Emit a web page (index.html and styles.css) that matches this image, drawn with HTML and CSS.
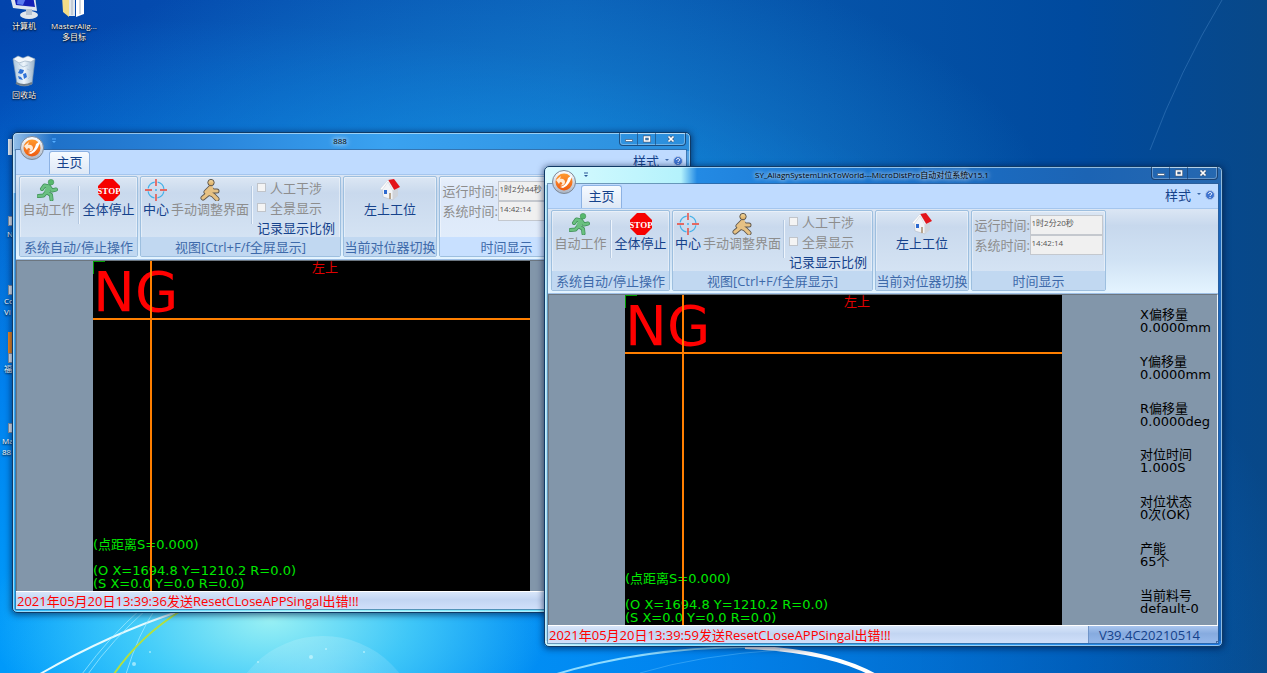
FILE: index.html
```
<!DOCTYPE html>
<html lang="zh-CN">
<head>
    <meta charset="UTF-8">
    <meta name="viewport" content="width=device-width, initial-scale=1.0">
    <title>MicroDistPro自动对位系统</title>
    <link rel="stylesheet" href="styles.css">
</head>
<body>
    <!-- Shared icons -->
    <svg class="sprite" aria-hidden="true">
        <defs>
            <linearGradient id="orbRim" x1="0" y1="0" x2="0" y2="1">
                <stop offset="0" stop-color="#ffffff"/><stop offset="1" stop-color="#a9b4c4"/>
            </linearGradient>
            <linearGradient id="orbFill" x1="0" y1="0" x2="0" y2="1">
                <stop offset="0" stop-color="#ff9a2e"/><stop offset="1" stop-color="#ee5a10"/>
            </linearGradient>
            <linearGradient id="goldFill" x1="0" y1="0" x2="0" y2="1">
                <stop offset="0" stop-color="#f4d9a0"/><stop offset="1" stop-color="#d9a95c"/>
            </linearGradient>
            <linearGradient id="binFill" x1="0" y1="0" x2="1" y2="0">
                <stop offset="0" stop-color="#a9c4dc"/><stop offset="0.5" stop-color="#eef6fc"/><stop offset="1" stop-color="#93aec8"/>
            </linearGradient>
        </defs>
        <symbol id="i-orb" viewBox="0 0 24 24">
            <circle cx="12" cy="12" r="11.5" fill="url(#orbRim)" stroke="#7c8898"/>
            <circle cx="12" cy="12" r="8.500" fill="url(#orbFill)"/>
            <path d="M4 10l5-4-1 3c3-1 5 1 5 3 0 3-3 4-5 3 3 0 3-3 0-3l-1 2z" fill="#ffe9d2"/>
            <path d="M20 5c-1 6-4 11-9 13l-3-1c5-1 7-5 8-9z" fill="#fff"/>
        </symbol>
        <symbol id="i-run" viewBox="0 0 22 22">
            <path d="M5 10L7.500 6.500 12 7.500 9.500 13l4.500 3 .5 4.500M9.500 13l-3 3.500-5 .5M12 7.500l3 4 4-1" fill="none" stroke="#3f8f57" stroke-width="4" stroke-linecap="round" stroke-linejoin="round"/>
            <path d="M5 10L7.500 6.500 12 7.500 9.500 13l4.500 3 .5 4.500M9.500 13l-3 3.500-5 .5M12 7.500l3 4 4-1" fill="none" stroke="#6ac080" stroke-width="2.600" stroke-linecap="round" stroke-linejoin="round"/>
            <path d="M12 7.500L9.500 13" stroke="#6ac080" stroke-width="5"/>
            <circle cx="14" cy="3.200" r="2.800" fill="#57b96d" stroke="#3f8f57" stroke-width="0.600"/>
        </symbol>
        <symbol id="i-stop" viewBox="0 0 22 22">
            <path d="M7 0h8l7 7v8l-7 7H7l-7-7V7z" fill="#f60000"/>
        </symbol>
        <symbol id="i-target" viewBox="0 0 22 22">
            <circle cx="11" cy="11" r="8" fill="none" stroke="#45b2e8" stroke-width="1.200" stroke-dasharray="9.560 3" stroke-dashoffset="-1.500"/>
            <path d="M11 0v7M11 15v7M0 11h7M15 11h7" stroke="#ea4335" stroke-width="1.400"/>
            <circle cx="11" cy="11" r="1" fill="#45b2e8"/>
        </symbol>
        <symbol id="i-man" viewBox="0 0 22 22">
            <g fill="none" stroke-linecap="round" stroke-linejoin="round">
                <path d="M11 9l-4 4M11 9l-1 5-6 5M10 14l4 2 4 4M11 9l3 3h4" stroke="#5e574e" stroke-width="5"/>
                <path d="M11 9l-4 4M11 9l-1 5-6 5M10 14l4 2 4 4M11 9l3 3h4" stroke="#e6c184" stroke-width="3.200"/>
                <path d="M12 9l-1 5" stroke="#e6c184" stroke-width="4.500"/>
            </g>
            <circle cx="12" cy="3.600" r="3.200" fill="url(#goldFill)" stroke="#5e574e"/>
        </symbol>
        <symbol id="i-house" viewBox="0 0 22 22">
            <path d="M3 10l6-8 5 9v10l-10-3z" fill="#f2f4f7" stroke="#b5bcc8" stroke-width="0.600"/>
            <path d="M14 11l5-2v8l-5 4z" fill="#cfd3da"/>
            <path d="M9 1l6-1 6 8-6 3z" fill="#e3151b"/>
            <path d="M9 1l6 10-1 1-5-9-6 8-2-1z" fill="#fff" stroke="#c3c8d0" stroke-width="0.400"/>
            <path d="M5 11h3v4H5z" fill="#2d6ad0"/>
            <path d="M10 14h2v6h-2z" fill="#b7a58e"/>
        </symbol>
        <symbol id="i-help" viewBox="0 0 10 10">
            <circle cx="5" cy="5" r="4.500" fill="#3f74d0" stroke="#b4c6e4"/>
            <path d="M3.500 4c0-2 3.200-2 3.200-.2C6.700 5 5 4.800 5 6M5 7v1" fill="none" stroke="#fff"/>
        </symbol>
        <symbol id="i-qat" viewBox="0 0 6 6">
            <path d="M1 1h4" stroke="#2b5796"/><path d="M1 3h4L3 5z" fill="#2b5796"/>
        </symbol>
        <symbol id="i-min" viewBox="0 0 10 8">
            <path d="M1.500 4.500h7v2h-7z" fill="#fff" stroke="#445a78" stroke-width="0.700"/>
        </symbol>
        <symbol id="i-max" viewBox="0 0 10 8">
            <path d="M2.500 2h5v4h-5z" fill="none" stroke="#445a78" stroke-width="2.800"/>
            <path d="M2.500 2h5v4h-5z" fill="none" stroke="#fff" stroke-width="1.600"/>
        </symbol>
        <symbol id="i-close" viewBox="0 0 10 8">
            <path d="M2.500 1.500l5 5M7.500 1.500l-5 5" stroke="#445a78" stroke-width="3"/>
            <path d="M2.500 1.500l5 5M7.500 1.500l-5 5" stroke="#fff" stroke-width="1.700"/>
        </symbol>
    </svg>

    <main class="desktop">
        <!-- Wallpaper light beams -->
        <svg class="wallpaper" viewBox="0 0 1267 673" preserveAspectRatio="none" aria-hidden="true">
            <defs>
                <filter id="soft"><feGaussianBlur stdDeviation="0.700"/></filter>
                <radialGradient id="disc" cx="0.500" cy="0.200" r="0.700">
                    <stop offset="0" stop-color="#fff" stop-opacity="0.200"/><stop offset="1" stop-color="#fff" stop-opacity="0.040"/>
                </radialGradient>
            </defs>
            <circle cx="323" cy="733" r="97" fill="url(#disc)"/>
            <g fill="none" filter="url(#soft)">
                <path d="M40 674Q110 634 180 611" stroke="#e4fbff" stroke-width="2"/>
                <path d="M82 674Q110 636 142 608M88 674Q112 640 148 608M126 674Q138 634 156 608" stroke="#a8ecff" stroke-opacity="0.700"/>
                <path d="M114 674Q140 636 182 610" stroke="#b4e03c" stroke-width="2"/>
                <path d="M550 676Q640 648 745 647" stroke="#8fdcff" stroke-width="2"/>
                <path d="M745 647Q830 650 876 676" stroke="#fff" stroke-width="4"/>
                <path d="M640 673Q700 655 780 650" stroke="#6fc8ff" stroke-opacity="0.400"/>
                <path d="M1222 0Q1180 70 1150 150" stroke="#6aa4e0" stroke-opacity="0.300"/>
            </g>
            <g fill="#d8fbff" fill-opacity="0.600">
                <circle cx="134" cy="664" r="2"/><circle cx="150" cy="652" r="1"/><circle cx="311" cy="657" r="2"/>
                <circle cx="326" cy="649" r="1"/><circle cx="258" cy="662" r="1"/><circle cx="364" cy="652" r="1"/>
            </g>
        </svg>

        <div class="shortcut computer">
            <svg width="32" height="24" viewBox="0 0 32 24">
                <path d="M2 0h25l2 15-24-3z" fill="#dfe6ef"/>
                <path d="M6 0h19l2 11L8 9z" fill="#1320b8"/><path d="M10 0h9l-4 9-6-1z" fill="#5a78f0"/>
                <ellipse cx="21" cy="19" rx="9" ry="4" fill="#e2e7ec"/><path d="M18 13h6v6h-6z" fill="#b8c4d2"/>
            </svg>
            <span>计算机</span>
        </div>
        <div class="shortcut folder">
            <svg width="28" height="24" viewBox="0 0 28 24">
                <path d="M2 0h7v21L3 16z" fill="#f3dd88"/><path d="M9 0h6v20H9z" fill="#dfe6ec"/>
                <path d="M16 0h8v18l-8 3z" fill="#fff"/><path d="M12 0v19M20 0v18" stroke="#a8b4c0"/>
            </svg>
            <span>MasterAlig...<br>多目标</span>
        </div>
        <div class="shortcut bin">
            <svg width="28" height="34" viewBox="0 0 28 34">
                <path d="M3 4h22l-3 25q-8 4-15 0z" fill="url(#binFill)" stroke="#7f98b0" stroke-width="0.600"/>
                <path d="M3 4l5-3 5 2 5-2 7 3-4 3-6-1-6 2z" fill="#f2f7fb" stroke="#92a8bc" stroke-width="0.600"/>
                <path d="M9 9l4 3 5-2M17 14l5 2M8 14l4 2M18 24l3-3" stroke="#b4c8da" fill="none"/>
                <path d="M8 18l2-4 4 1-1 3-2 1zM13 19l3-1 1 4-3 2zM8 21l3 1 2 3-4-1z" fill="#2f72d6"/>
                <path d="M6 28q8 4 16 0" fill="none" stroke="#6d7c88" stroke-width="2"/>
            </svg>
            <span>回收站</span>
        </div>
        <div class="hidden-file file-blank"><i class="thumb"></i></div>
        <div class="hidden-file file-n"><i class="link-mark"></i><span>N</span></div>
        <div class="hidden-file file-co"><i class="link-mark"></i><span>Co<br>Vi</span></div>
        <div class="hidden-file file-fu"><i class="thumb orange"></i><i class="link-mark"></i><span>福</span></div>
        <div class="hidden-file file-ma"><i class="link-mark"></i><span>Ma<br>88</span></div>

        <section class="window window-back">
            <header class="title-bar">
                <svg class="orb"><use href="#i-orb"/></svg>
                <button class="quick" aria-label="自定义"><svg width="6" height="6"><use href="#i-qat"/></svg></button>
                <h1>888</h1>
                <div class="caption-buttons">
                    <button aria-label="最小化"><svg><use href="#i-min"/></svg></button>
                    <button aria-label="最大化"><svg><use href="#i-max"/></svg></button>
                    <button class="close" aria-label="关闭"><svg><use href="#i-close"/></svg></button>
                </div>
            </header>
            <div class="client">
                <nav class="tabs">
                    <button class="tab">主页</button>
                    <button class="style-menu">样式<i class="arrow"></i></button>
                    <button class="help" aria-label="帮助"><svg width="10" height="10"><use href="#i-help"/></svg></button>
                </nav>
                <div class="ribbon">
                    <div class="group group-run">
                        <div class="group-body">
                            <button class="tool" disabled><svg><use href="#i-run"/></svg>自动工作</button>
                            <i class="divider"></i>
                            <button class="tool"><svg viewBox="0 0 22 22"><use href="#i-stop"/><text x="11" y="15" text-anchor="middle" class="stop-text">STOP</text></svg>全体停止</button>
                        </div>
                        <div class="group-name">系统自动/停止操作</div>
                    </div>
                    <div class="group group-view">
                        <div class="group-body">
                            <button class="tool"><svg><use href="#i-target"/></svg>中心</button>
                            <button class="tool" disabled><svg><use href="#i-man"/></svg>手动调整界面</button>
                            <i class="divider"></i>
                            <div class="checks">
                                <label><input type="checkbox" disabled>人工干涉</label>
                                <label><input type="checkbox" disabled>全景显示</label>
                                <button>记录显示比例</button>
                            </div>
                        </div>
                        <div class="group-name">视图[Ctrl+F/f全屏显示]</div>
                    </div>
                    <div class="group group-station">
                        <div class="group-body">
                            <button class="tool"><svg><use href="#i-house"/></svg>左上工位</button>
                        </div>
                        <div class="group-name">当前对位器切换</div>
                    </div>
                    <div class="group group-time hover">
                        <div class="group-body times">
                            <label for="run1">运行时间:</label><input id="run1" type="text" value="1时2分44秒" readonly>
                            <label for="sys1">系统时间:</label><input id="sys1" type="text" value="14:42:14" readonly>
                        </div>
                        <div class="group-name">时间显示</div>
                    </div>
                </div>
                <div class="view">
                    <div class="camera">
                        <div class="position">左上</div>
                        <div class="verdict">NG</div>
                        <div class="readout">
                            <p>(点距离S=0.000)</p>
                            <p>(O X=1694.8 Y=1210.2 R=0.0)<br>(S X=0.0 Y=0.0 R=0.0)</p>
                        </div>
                        <i class="cross-x"></i>
                        <i class="cross-y"></i>
                    </div>
                </div>
                <footer class="status"><span class="log">2021年05月20日13:39:36发送ResetCLoseAPPSingal出错!!!</span></footer>
            </div>
        </section>

        <section class="window window-front">
            <header class="title-bar">
                <svg class="orb"><use href="#i-orb"/></svg>
                <button class="quick" aria-label="自定义"><svg width="6" height="6"><use href="#i-qat"/></svg></button>
                <h1>SY_AliagnSystemLinkToWorld---MicroDistPro自动对位系统V15.1</h1>
                <div class="caption-buttons">
                    <button aria-label="最小化"><svg><use href="#i-min"/></svg></button>
                    <button aria-label="最大化"><svg><use href="#i-max"/></svg></button>
                    <button class="close" aria-label="关闭"><svg><use href="#i-close"/></svg></button>
                </div>
            </header>
            <div class="client">
                <nav class="tabs">
                    <button class="tab">主页</button>
                    <button class="style-menu">样式<i class="arrow"></i></button>
                    <button class="help" aria-label="帮助"><svg width="10" height="10"><use href="#i-help"/></svg></button>
                </nav>
                <div class="ribbon">
                    <div class="group group-run">
                        <div class="group-body">
                            <button class="tool" disabled><svg><use href="#i-run"/></svg>自动工作</button>
                            <i class="divider"></i>
                            <button class="tool"><svg viewBox="0 0 22 22"><use href="#i-stop"/><text x="11" y="15" text-anchor="middle" class="stop-text">STOP</text></svg>全体停止</button>
                        </div>
                        <div class="group-name">系统自动/停止操作</div>
                    </div>
                    <div class="group group-view">
                        <div class="group-body">
                            <button class="tool"><svg><use href="#i-target"/></svg>中心</button>
                            <button class="tool" disabled><svg><use href="#i-man"/></svg>手动调整界面</button>
                            <i class="divider"></i>
                            <div class="checks">
                                <label><input type="checkbox" disabled>人工干涉</label>
                                <label><input type="checkbox" disabled>全景显示</label>
                                <button>记录显示比例</button>
                            </div>
                        </div>
                        <div class="group-name">视图[Ctrl+F/f全屏显示]</div>
                    </div>
                    <div class="group group-station">
                        <div class="group-body">
                            <button class="tool"><svg><use href="#i-house"/></svg>左上工位</button>
                        </div>
                        <div class="group-name">当前对位器切换</div>
                    </div>
                    <div class="group group-time">
                        <div class="group-body times">
                            <label for="run2">运行时间:</label><input id="run2" type="text" value="1时2分20秒" readonly>
                            <label for="sys2">系统时间:</label><input id="sys2" type="text" value="14:42:14" readonly>
                        </div>
                        <div class="group-name">时间显示</div>
                    </div>
                </div>
                <div class="view">
                    <div class="camera">
                        <div class="position">左上</div>
                        <div class="verdict">NG</div>
                        <div class="readout">
                            <p>(点距离S=0.000)</p>
                            <p>(O X=1694.8 Y=1210.2 R=0.0)<br>(S X=0.0 Y=0.0 R=0.0)</p>
                        </div>
                        <i class="cross-x"></i>
                        <i class="cross-y"></i>
                    </div>
                    <dl class="results">
                        <div><dt>X偏移量</dt><dd>0.0000mm</dd></div>
                        <div><dt>Y偏移量</dt><dd>0.0000mm</dd></div>
                        <div><dt>R偏移量</dt><dd>0.0000deg</dd></div>
                        <div><dt>对位时间</dt><dd>1.000S</dd></div>
                        <div><dt>对位状态</dt><dd>0次(OK)</dd></div>
                        <div><dt>产能</dt><dd>65个</dd></div>
                        <div><dt>当前料号</dt><dd>default-0</dd></div>
                    </dl>
                </div>
                <footer class="status">
                    <span class="log">2021年05月20日13:39:59发送ResetCLoseAPPSingal出错!!!</span>
                    <span class="version">V39.4C20210514</span>
                </footer>
            </div>
        </section>
    </main>
</body>
</html>
```
FILE: styles.css
```
* {
    box-sizing: border-box;
}

body {
    margin: 0;
    font-family: "Open Sans", "Noto Sans CJK SC", sans-serif;
    font-size: 13px;
    font-variant-ligatures: none;
    color: #15428b;
}

button, input {
    font: inherit;
    color: inherit;
    margin: 0;
    padding: 0;
    border: 0;
    background: none;
}

i {
    display: block;
}

.sprite {
    position: absolute;
    width: 0;
    height: 0;
}

.stop-text {
    font: bold 10px "Liberation Sans Narrow", "Liberation Serif", sans-serif;
    font-size: 9px;
    fill: #ffffff;
}

/* Desktop */
.desktop {
    position: relative;
    min-height: 100vh;
    overflow: hidden;
    background:
        radial-gradient(ellipse 280px 150px at 270px 620px, #98f0f4, rgba(90, 220, 248, 0.7) 50%, transparent),
        radial-gradient(ellipse 560px 300px at 500px 240px, rgba(28, 156, 232, 0.8), transparent),
        radial-gradient(ellipse 1150px 640px at 160px 660px, #00a4ff, rgba(0, 140, 250, 0.85) 45%, transparent),
        linear-gradient(90deg, #0244ac, #0a5cb4 45%, #004a9e 85%, #084888);
}

.wallpaper {
    display: block;
    position: absolute;
    inset: 0;
    width: 100%;
    height: 100%;
}

.shortcut {
    position: absolute;
    width: 56px;
    text-align: center;
    font-size: 8px;
    line-height: 11px;
    color: #ffffff;
    text-shadow: 0 1px 2px #000000, 0 0 1px #000000;
}

.shortcut svg {
    display: block;
    margin: 0 auto;
}

.computer {
    left: -4px;
    top: -4px;
}

.folder {
    left: 46px;
    top: -4px;
}

.bin {
    left: -4px;
    top: 55px;
}

.hidden-file {
    position: absolute;
    width: 24px;
    font-size: 8px;
    line-height: 11px;
    color: #ffffff;
    text-shadow: 0 1px 2px #000000;
}

.hidden-file span {
    display: block;
}

.thumb {
    width: 16px;
    height: 16px;
    background: #f2f8fc;
}

.thumb.orange {
    height: 21px;
    margin-left: 4px;
    background: #f58a1c;
}

.link-mark {
    width: 10px;
    height: 10px;
    margin-left: 4px;
    border: 1px solid #8795a3;
    background: #e8eef4;
}

.file-blank {
    left: 8px;
    top: 139px;
}

.file-n {
    left: 7px;
    top: 216px;
}

.file-n .link-mark {
    margin: 0 0 2px 1px;
}

.file-co {
    left: 4px;
    top: 285px;
}

.file-fu {
    left: 4px;
    top: 332px;
}

.file-ma {
    left: 2px;
    top: 423px;
}

.file-ma .link-mark {
    margin: 0 0 2px 6px;
}

/* Application window */
.window {
    position: absolute;
    width: 679px;
    padding: 0 4px 3px 3px;
    border: 1px solid #0f3a66;
    border-radius: 5px;
    box-shadow: inset 0 0 0 1px rgba(220, 245, 255, 0.6), 0 1px 6px 1px rgba(0, 20, 60, 0.6);
}

.window-back {
    left: 12px;
    top: 132px;
    background:
        linear-gradient(90deg, rgba(200, 228, 250, 0.7), transparent 40px) 0 0 / 100% 60px no-repeat,
        linear-gradient(90deg, transparent, #9af4fa 45%, #58d8fa) 0 100% / 100% 5px no-repeat,
        linear-gradient(90deg, #1c6cc4, #2a86dc 30%, #3aa2f0 55%, #2b8edc) 0 0 / 100% 18px no-repeat,
        linear-gradient(180deg, #5aa4e4, #38a8f4 60%, #2ab6fa);
}

.window-front {
    left: 544px;
    top: 166px;
    background:
        linear-gradient(90deg, #d9fbff, #b4f2fc 136px, #238ae4 152px, #1a72cc 50%, #1c64b4 80%, #2668b0) 0 0 / 100% 18px no-repeat,
        linear-gradient(90deg, #c4f4fc, #4cc4f6 20%, #1c78e0) 0 100% / 100% 5px no-repeat,
        linear-gradient(90deg, #a6e0f4 5px, #1a66bc 6px);
}

.title-bar {
    display: flex;
    align-items: flex-start;
    height: 17px;
}

.orb {
    position: relative;
    z-index: 1;
    flex: none;
    width: 24px;
    height: 24px;
    margin: 3px 0 0 4px;
}

.quick {
    width: 14px;
    height: 16px;
    margin-left: 3px;
}

.quick svg {
    display: block;
    margin: 0 auto;
}

.window-back .quick svg {
    filter: brightness(2);
}

.title-bar h1 {
    flex: 1;
    margin: 0;
    font-size: 8px;
    font-weight: 400;
    line-height: 16px;
    text-align: center;
    white-space: nowrap;
    color: #000000;
    text-shadow: 0 0 4px #ffffff, 0 0 6px #ffffff;
}

.caption-buttons {
    display: flex;
    height: 13px;
    border: 1px solid rgba(20, 50, 90, 0.7);
    border-top: 0;
    border-radius: 0 0 4px 4px;
    box-shadow: inset 0 0 0 1px rgba(255, 255, 255, 0.3);
}

.caption-buttons button {
    width: 18px;
    border-right: 1px solid rgba(20, 50, 90, 0.5);
}

.caption-buttons .close {
    width: 29px;
    border-right: 0;
}

.caption-buttons svg {
    display: block;
    width: 10px;
    height: 8px;
    margin: 0 auto;
}

.client {
    background: #bfdbff;
    outline: 1px solid rgba(50, 90, 140, 0.6);
}

/* Ribbon */
.tabs {
    display: flex;
    align-items: flex-end;
    height: 24px;
    padding-left: 33px;
}

.tab {
    width: 41px;
    height: 23px;
    padding-bottom: 3px;
    border: 1px solid #8db2e3;
    border-bottom: 0;
    border-radius: 3px 3px 0 0;
    background: linear-gradient(#f6faff, #dde8f6);
}

.style-menu {
    display: flex;
    align-items: center;
    gap: 6px;
    height: 24px;
    margin-left: auto;
    padding-bottom: 4px;
}

.arrow {
    border: 2px solid transparent;
    border-top-color: #3d69a8;
    border-bottom: 0;
}

.help {
    height: 24px;
    margin: 0 3px 0 4px;
    padding-bottom: 2px;
}

.help svg {
    display: block;
}

.ribbon {
    display: flex;
    gap: 2px;
    height: 86px;
    padding: 1px 3px 2px;
    border-top: 1px solid #a5c6ee;
    border-bottom: 1px solid #9fc0e6;
    background: linear-gradient(#dbe6f4, #c7d8ed 20%, #d0e2f4 60%, #e4f4ff);
}

.group {
    display: flex;
    flex-direction: column;
    flex: none;
    border: 1px solid #9dbfdf;
    border-radius: 2px;
    background: linear-gradient(#dce7f4, #c9d9ed 20%, #d9e7f6);
    box-shadow: inset 0 0 0 1px rgba(255, 255, 255, 0.4);
}

.group.hover {
    background: linear-gradient(#e8f0fb, #dce7f8 20%, #e2eefc);
}

.group-run {
    width: 119px;
}

.group-view {
    width: 201px;
}

.group-station {
    width: 94px;
}

.group-time {
    width: 135px;
}

.group-body {
    display: flex;
    flex: 1;
    justify-content: center;
    gap: 3px;
    min-height: 0;
}

.group-name {
    height: 19px;
    line-height: 20px;
    text-align: center;
    white-space: nowrap;
    color: #3e6aaa;
    background: #c1d8f1;
}

.hover .group-name {
    background: #c8e0ff;
}

.tool {
    display: flex;
    flex-direction: column;
    align-items: center;
    line-height: 17px;
    white-space: nowrap;
}

.tool svg {
    width: 22px;
    height: 22px;
    margin-top: 2px;
}

.tool:disabled,
.group label {
    color: #8d8d8d;
}

.divider {
    width: 2px;
    height: 38px;
    margin-top: 9px;
    border-left: 1px solid #b4c8e0;
    background: #eef5fd;
}

.group-view .group-body {
    justify-content: flex-start;
    padding-left: 2px;
    gap: 2px;
}

.checks {
    display: flex;
    flex-direction: column;
    margin-left: 2px;
}

.checks label,
.checks button {
    display: flex;
    align-items: center;
    height: 20px;
    white-space: nowrap;
}

.checks input {
    appearance: none;
    width: 9px;
    height: 9px;
    margin-right: 4px;
    border: 1px solid #c0c4ca;
    background: #f4f4f4;
}

.group .times {
    display: grid;
    grid-template-columns: 53px 73px;
    grid-auto-rows: 20px;
    gap: 0 2px;
    padding-top: 4px;
}

.times label {
    line-height: 20px;
    white-space: nowrap;
}

.times input {
    width: 100%;
    height: 20px;
    padding: 0 0 6px 1px;
    border: 1px solid #c4c8ce;
    background: #f0f0f0;
    font-size: 8px;
    color: #555555;
}

/* Camera view */
.view {
    display: grid;
    grid-template-columns: 76fr 437fr 155fr;
    min-height: 331px;
    border-top: 1px solid #6c7680;
    border-right: 1px solid #eef4fa;
    border-left: 1px solid #70757c;
    background: #8296aa;
    font-family: "DejaVu Sans", "Noto Sans CJK SC", sans-serif;
    line-height: 13px;
}

.camera {
    position: relative;
    grid-column: 2;
    display: flex;
    flex-direction: column;
    background: linear-gradient(#00a000, #00a000) 0 0 / 12px 1px no-repeat, linear-gradient(#00a000, #00a000) 0 0 / 1px 13px no-repeat, #000000;
}

.position {
    height: 8px;
    padding-left: 219px;
    color: #e00000;
}

.verdict {
    font-size: 56px;
    line-height: 46px;
    color: #ff0000;
}

.readout {
    margin-top: auto;
    padding-bottom: 1px;
    color: #00e800;
}

.readout p {
    margin: 13px 0 0;
}

/* Crosshair lies over the picture and its texts */
.cross-x,
.cross-y {
    position: absolute;
    background: #ff7f00;
}

.cross-x {
    top: 57px;
    left: 0;
    right: 0;
    height: 2px;
}

.cross-y {
    top: 0;
    bottom: 0;
    left: 57px;
    width: 2px;
}

.results {
    display: flex;
    flex-direction: column;
    justify-content: space-between;
    margin: 0;
    padding: 13px 0 10px 78px;
    color: #000000;
    white-space: nowrap;
}

.results dd {
    margin: 0;
}

/* Status bar */
.status {
    display: flex;
    height: 18px;
    border-top: 1px solid #ffffff;
    line-height: 18px;
    white-space: nowrap;
    background: linear-gradient(#d8e6fa, #c2d5f2 45%, #d0e0fa);
}

.log {
    flex: 1;
    padding-left: 1px;
    color: #ff0000;
}

.version {
    width: 130px;
    padding-right: 8px;
    border-left: 1px solid #6f94c8;
    text-align: center;
    background:
        radial-gradient(circle, #4a6a9c 1px, transparent 1px) 100% 100% / 3px 3px no-repeat,
        linear-gradient(#a8c4ee, #86abdf 45%, #94b7ea);
}
```
